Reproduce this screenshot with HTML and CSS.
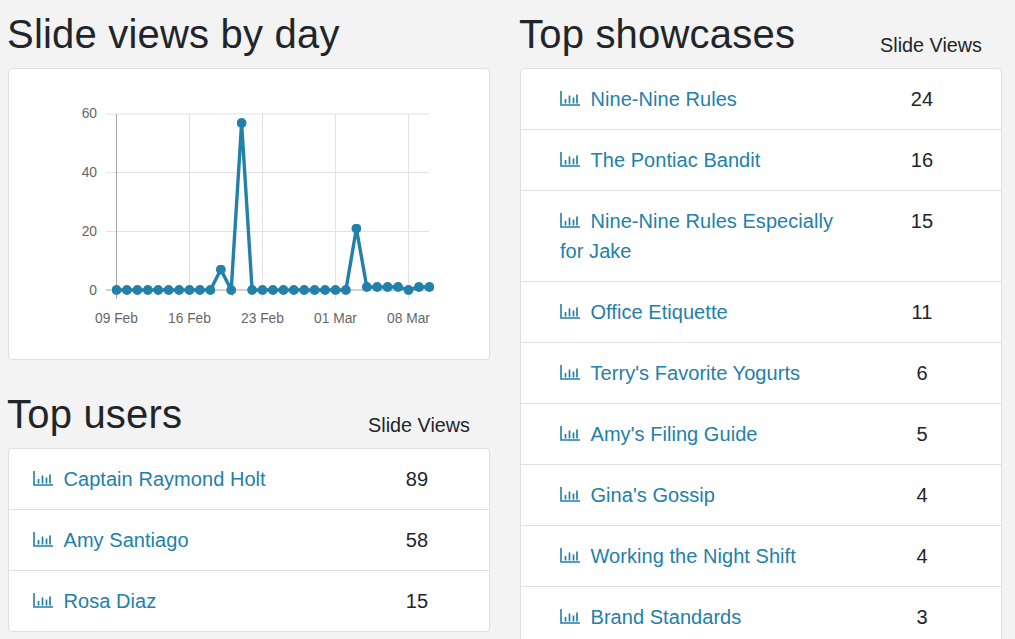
FILE: index.html
```html
<!DOCTYPE html>
<html lang="en">
<head>
    <meta charset="UTF-8">
    <title>Analytics</title>
    <link rel="stylesheet" href="styles.css">
</head>
<body>
    <svg class="icon-defs" width="0" height="0">
        <symbol id="bars" viewBox="0 0 20 15">
            <path d="M1 0V14H20" fill="none" stroke="currentColor" stroke-width="1.6"/>
            <path d="M5.5 12.5V8M9.5 12.5V4.5M13.5 12.5V6.5M17 12.5V3.5" fill="none" stroke="currentColor" stroke-width="1.7"/>
        </symbol>
    </svg>

    <div class="columns">
        <div class="column">
            <div class="section-head">
                <h2>Slide views by day</h2>
            </div>
            <div class="card chart-card">
                <svg class="chart" width="480" height="290" viewBox="9 69 480 290">
                    <defs>
                        <marker id="dot" markerUnits="userSpaceOnUse" markerWidth="10" markerHeight="10" refX="5" refY="5">
                            <circle cx="5" cy="5" r="4.9" fill="#2280a9"/>
                        </marker>
                    </defs>
                    <g class="grid">
                        <path d="M106 114H429.5M106 172.5H429.5M106 231.5H429.5"/>
                        <path d="M189.5 114V299M262.5 114V299M335.5 114V299M408.5 114V299"/>
                    </g>
                    <g class="axis">
                        <path d="M116.5 114V299M106 290H429.5"/>
                    </g>
                    <g class="labels-y">
                        <text x="97" y="118">60</text>
                        <text x="97" y="177">40</text>
                        <text x="97" y="236">20</text>
                        <text x="97" y="295">0</text>
                    </g>
                    <g class="labels-x">
                        <text x="116.5" y="323">09 Feb</text>
                        <text x="189.5" y="323">16 Feb</text>
                        <text x="262.5" y="323">23 Feb</text>
                        <text x="335.5" y="323">01 Mar</text>
                        <text x="408.5" y="323">08 Mar</text>
                    </g>
                    <polyline class="line" points="116.5,290 126.9,290 137.4,290 147.8,290 158.2,290 168.6,290 179.1,290 189.5,290 199.9,290 210.4,290 220.8,269.5 231.2,290 241.6,123 252.1,290 262.5,290 272.9,290 283.4,290 293.8,290 304.2,290 314.6,290 325.1,290 335.5,290 345.9,290 356.4,228.5 366.8,287 377.2,287 387.6,287 398.1,287 408.5,290 418.9,287 429.4,287"/>
                </svg>
            </div>

            <div class="section-head users-head">
                <h2>Top users</h2>
                <span class="views-label">Slide Views</span>
            </div>
            <div class="card">
                <div class="row user-row">
                    <a class="name" href="#"><svg class="bar-icon"><use href="#bars"/></svg>Captain Raymond Holt</a>
                    <span class="count">89</span>
                </div>
                <div class="row user-row">
                    <a class="name" href="#"><svg class="bar-icon"><use href="#bars"/></svg>Amy Santiago</a>
                    <span class="count">58</span>
                </div>
                <div class="row user-row">
                    <a class="name" href="#"><svg class="bar-icon"><use href="#bars"/></svg>Rosa Diaz</a>
                    <span class="count">15</span>
                </div>
            </div>
        </div>

        <div class="column">
            <div class="section-head">
                <h2>Top showcases</h2>
                <span class="views-label">Slide Views</span>
            </div>
            <div class="card">
                <div class="row show-row">
                    <a class="name" href="#"><svg class="bar-icon"><use href="#bars"/></svg>Nine-Nine Rules</a>
                    <span class="count">24</span>
                </div>
                <div class="row show-row">
                    <a class="name" href="#"><svg class="bar-icon"><use href="#bars"/></svg>The Pontiac Bandit</a>
                    <span class="count">16</span>
                </div>
                <div class="row show-row">
                    <a class="name" href="#"><svg class="bar-icon"><use href="#bars"/></svg>Nine-Nine Rules Especially for Jake</a>
                    <span class="count">15</span>
                </div>
                <div class="row show-row">
                    <a class="name" href="#"><svg class="bar-icon"><use href="#bars"/></svg>Office Etiquette</a>
                    <span class="count">11</span>
                </div>
                <div class="row show-row">
                    <a class="name" href="#"><svg class="bar-icon"><use href="#bars"/></svg>Terry's Favorite Yogurts</a>
                    <span class="count">6</span>
                </div>
                <div class="row show-row">
                    <a class="name" href="#"><svg class="bar-icon"><use href="#bars"/></svg>Amy's Filing Guide</a>
                    <span class="count">5</span>
                </div>
                <div class="row show-row">
                    <a class="name" href="#"><svg class="bar-icon"><use href="#bars"/></svg>Gina's Gossip</a>
                    <span class="count">4</span>
                </div>
                <div class="row show-row">
                    <a class="name" href="#"><svg class="bar-icon"><use href="#bars"/></svg>Working the Night Shift</a>
                    <span class="count">4</span>
                </div>
                <div class="row show-row">
                    <a class="name" href="#"><svg class="bar-icon"><use href="#bars"/></svg>Brand Standards</a>
                    <span class="count">3</span>
                </div>
            </div>
        </div>
    </div>
</body>
</html>
```

FILE: styles.css
```css
html, body {
    height: 100%;
    overflow: hidden;
}

body {
    font-family: "Liberation Sans", Arial, sans-serif;
    background: #f3f3f3;
    color: #212529;
    margin: 0;
}

.icon-defs {
    display: block;
    height: 0;
}

.columns {
    display: grid;
    grid-template-columns: 482px 482px;
    column-gap: 30px;
    padding: 0 13px 0 8px;
}

.section-head {
    display: flex;
    justify-content: space-between;
    align-items: flex-end;
    height: 68px;
}

.users-head {
    height: 68px;
    margin-top: 20px;
}

h2 {
    font-size: 40px;
    font-weight: 400;
    letter-spacing: 0.2px;
    line-height: 46px;
    margin: 0 0 11px -1px;
}

.views-label {
    font-size: 19.8px;
    line-height: 22px;
    margin: 0 20px 12px 0;
}

.card {
    background: #fff;
    border: 1px solid #dfdfdf;
    border-radius: 4px;
}

.chart-card {
    height: 292px;
    box-sizing: border-box;
}

.chart {
    display: block;
}

.grid path {
    fill: none;
    stroke: #e2e2e2;
    stroke-width: 1;
}

.axis path {
    fill: none;
    stroke: #a5a5a5;
    stroke-width: 1;
}

.labels-y text,
.labels-x text {
    font-size: 13.8px;
    fill: #666;
}

.labels-y text {
    text-anchor: end;
}

.labels-x text {
    text-anchor: middle;
}

.line {
    fill: none;
    stroke: #2280a9;
    stroke-width: 3.4;
    marker-start: url(#dot);
    marker-mid: url(#dot);
    marker-end: url(#dot);
}

.row {
    display: flex;
    font-size: 20px;
    letter-spacing: 0.05px;
    line-height: 30px;
    padding: 15px 0;
    border-bottom: 1px solid #dfdfdf;
}

.row:last-child {
    border-bottom: 0;
}

.user-row {
    padding-left: 24px;
}

.show-row {
    padding-left: 39px;
}

.name {
    color: #2280a9;
    text-decoration: none;
    flex: 1;
}

.count {
    text-align: center;
}

.user-row .count {
    width: 144px;
}

.show-row .count {
    width: 158px;
}

.user-row .name {
    padding-right: 20px;
}

.bar-icon {
    width: 20px;
    height: 15px;
    margin-right: 10.5px;
}
```
